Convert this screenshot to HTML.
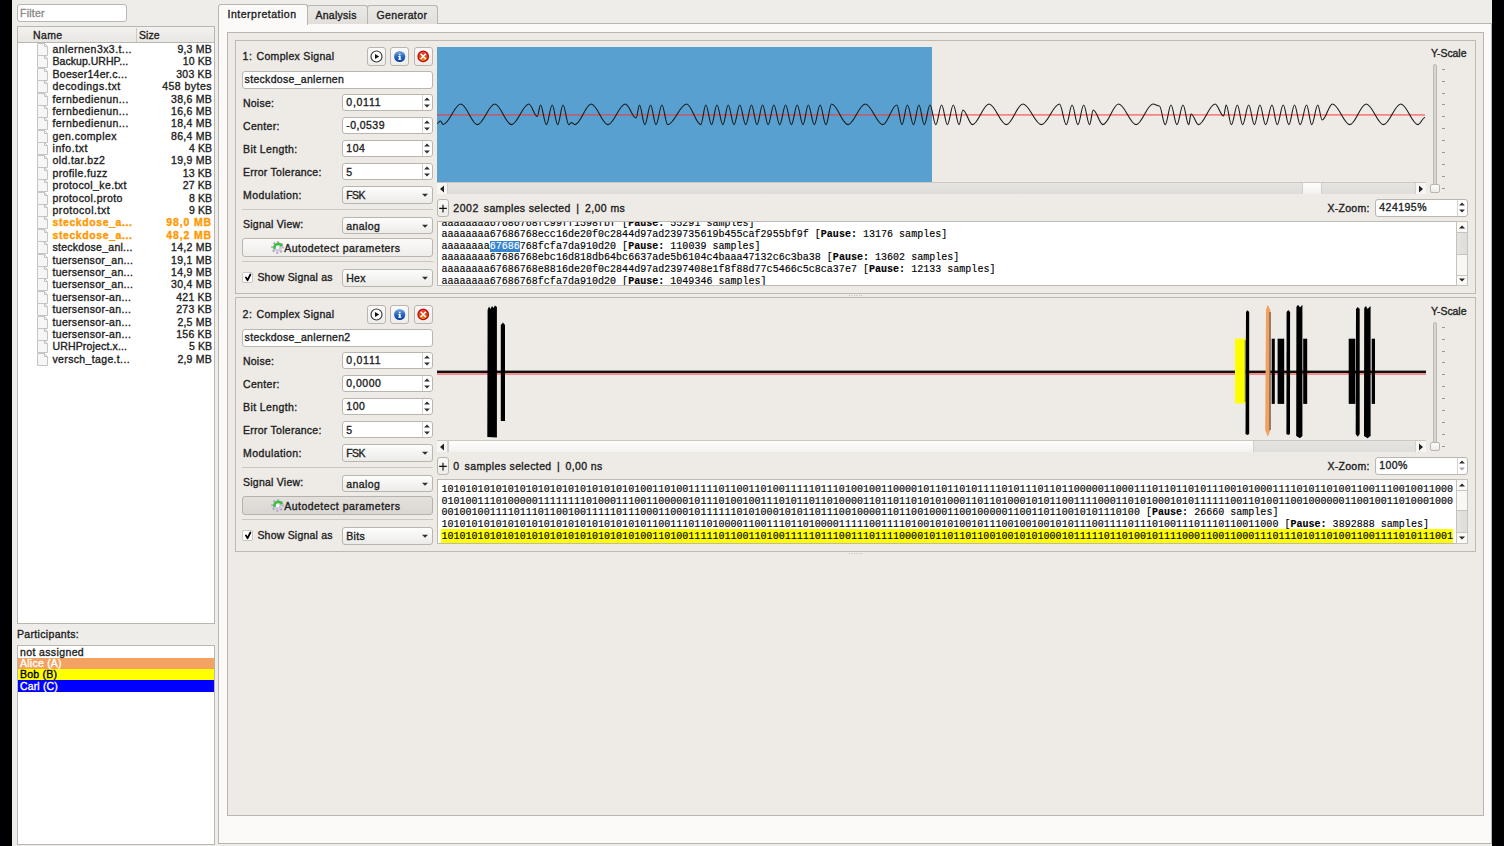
<!DOCTYPE html>
<html><head><meta charset="utf-8"><style>
html,body{margin:0;padding:0}
body{width:1504px;height:846px;position:relative;overflow:hidden;background:#efedea;font-family:"Liberation Sans",sans-serif;color:#1e1e1e}
body>div,body>svg{position:absolute}
.t{font-size:10.5px;line-height:13px;white-space:nowrap;-webkit-text-stroke:0.35px currentColor}
.m{font-family:"Liberation Mono",monospace;font-size:10px;letter-spacing:0.02px;line-height:11.6px;white-space:pre;color:#000;-webkit-text-stroke:0.15px #000}
</style></head><body>
<div style="left:0px;top:0px;width:12px;height:846px;background:#000"></div><div style="left:1492px;top:0px;width:12px;height:846px;background:#000"></div><div style="left:17px;top:4px;width:110px;height:18px;background:#fff;border:1px solid #b9b5af;border-radius:3px;box-sizing:border-box"></div><div class="t" style="left:20.00px;top:6.86px;font-size:10.5px;letter-spacing:0.237px;color:#8c8a87">Filter</div><div style="left:17px;top:26px;width:198px;height:598px;background:#fff;border:1px solid #b9b5af;box-sizing:border-box"></div><div style="left:18px;top:27px;width:196px;height:16px;background:linear-gradient(#f4f2f0,#e9e7e4);border-bottom:1px solid #b9b5af;box-sizing:border-box"></div><div style="left:136px;top:28px;width:1px;height:14px;background:#cfccc8"></div><div class="t" style="left:33.00px;top:28.56px;font-size:10.5px;letter-spacing:0.375px;">Name</div><div class="t" style="left:139.00px;top:28.56px;font-size:10.5px;letter-spacing:0.023px;">Size</div><svg style="left:36.5px;top:43.00px" width="11" height="13" viewBox="0 0 11 13"><path d="M0.5 0.5H7.5L10.5 3.5V12.5H0.5Z" fill="#f6f6f6" stroke="#c4c4c4"/><path d="M7.5 0.5V3.5H10.5" fill="none" stroke="#c4c4c4"/></svg><div class="t" style="left:52.50px;top:42.96px;font-size:10.5px;letter-spacing:0.441px;">anlernen3x3.t...</div><div class="t" style="right:1292.00px;top:42.96px;font-size:10.5px;letter-spacing:0.219px;">9,3 MB</div><svg style="left:36.5px;top:55.39px" width="11" height="13" viewBox="0 0 11 13"><path d="M0.5 0.5H7.5L10.5 3.5V12.5H0.5Z" fill="#f6f6f6" stroke="#c4c4c4"/><path d="M7.5 0.5V3.5H10.5" fill="none" stroke="#c4c4c4"/></svg><div class="t" style="left:52.50px;top:55.35px;font-size:10.5px;letter-spacing:0.039px;">Backup.URHP...</div><div class="t" style="right:1292.00px;top:55.35px;font-size:10.5px;letter-spacing:0.144px;">10 KB</div><svg style="left:36.5px;top:67.78px" width="11" height="13" viewBox="0 0 11 13"><path d="M0.5 0.5H7.5L10.5 3.5V12.5H0.5Z" fill="#f6f6f6" stroke="#c4c4c4"/><path d="M7.5 0.5V3.5H10.5" fill="none" stroke="#c4c4c4"/></svg><div class="t" style="left:52.50px;top:67.74px;font-size:10.5px;letter-spacing:0.284px;">Boeser14er.c...</div><div class="t" style="right:1292.00px;top:67.74px;font-size:10.5px;letter-spacing:0.206px;">303 KB</div><svg style="left:36.5px;top:80.17px" width="11" height="13" viewBox="0 0 11 13"><path d="M0.5 0.5H7.5L10.5 3.5V12.5H0.5Z" fill="#f6f6f6" stroke="#c4c4c4"/><path d="M7.5 0.5V3.5H10.5" fill="none" stroke="#c4c4c4"/></svg><div class="t" style="left:52.50px;top:80.13px;font-size:10.5px;letter-spacing:0.477px;">decodings.txt</div><div class="t" style="right:1292.00px;top:80.13px;font-size:10.5px;letter-spacing:0.476px;">458 bytes</div><svg style="left:36.5px;top:92.56px" width="11" height="13" viewBox="0 0 11 13"><path d="M0.5 0.5H7.5L10.5 3.5V12.5H0.5Z" fill="#f6f6f6" stroke="#c4c4c4"/><path d="M7.5 0.5V3.5H10.5" fill="none" stroke="#c4c4c4"/></svg><div class="t" style="left:52.50px;top:92.52px;font-size:10.5px;letter-spacing:0.415px;">fernbedienun...</div><div class="t" style="right:1292.00px;top:92.52px;font-size:10.5px;letter-spacing:0.261px;">38,6 MB</div><svg style="left:36.5px;top:104.95px" width="11" height="13" viewBox="0 0 11 13"><path d="M0.5 0.5H7.5L10.5 3.5V12.5H0.5Z" fill="#f6f6f6" stroke="#c4c4c4"/><path d="M7.5 0.5V3.5H10.5" fill="none" stroke="#c4c4c4"/></svg><div class="t" style="left:52.50px;top:104.91px;font-size:10.5px;letter-spacing:0.415px;">fernbedienun...</div><div class="t" style="right:1292.00px;top:104.91px;font-size:10.5px;letter-spacing:0.261px;">16,6 MB</div><svg style="left:36.5px;top:117.34px" width="11" height="13" viewBox="0 0 11 13"><path d="M0.5 0.5H7.5L10.5 3.5V12.5H0.5Z" fill="#f6f6f6" stroke="#c4c4c4"/><path d="M7.5 0.5V3.5H10.5" fill="none" stroke="#c4c4c4"/></svg><div class="t" style="left:52.50px;top:117.30px;font-size:10.5px;letter-spacing:0.415px;">fernbedienun...</div><div class="t" style="right:1292.00px;top:117.30px;font-size:10.5px;letter-spacing:0.261px;">18,4 MB</div><svg style="left:36.5px;top:129.73px" width="11" height="13" viewBox="0 0 11 13"><path d="M0.5 0.5H7.5L10.5 3.5V12.5H0.5Z" fill="#f6f6f6" stroke="#c4c4c4"/><path d="M7.5 0.5V3.5H10.5" fill="none" stroke="#c4c4c4"/></svg><div class="t" style="left:52.50px;top:129.69px;font-size:10.5px;letter-spacing:0.442px;">gen.complex</div><div class="t" style="right:1292.00px;top:129.69px;font-size:10.5px;letter-spacing:0.261px;">86,4 MB</div><svg style="left:36.5px;top:142.12px" width="11" height="13" viewBox="0 0 11 13"><path d="M0.5 0.5H7.5L10.5 3.5V12.5H0.5Z" fill="#f6f6f6" stroke="#c4c4c4"/><path d="M7.5 0.5V3.5H10.5" fill="none" stroke="#c4c4c4"/></svg><div class="t" style="left:52.50px;top:142.08px;font-size:10.5px;letter-spacing:0.574px;">info.txt</div><div class="t" style="right:1292.00px;top:142.08px;font-size:10.5px;letter-spacing:0.051px;">4 KB</div><svg style="left:36.5px;top:154.51px" width="11" height="13" viewBox="0 0 11 13"><path d="M0.5 0.5H7.5L10.5 3.5V12.5H0.5Z" fill="#f6f6f6" stroke="#c4c4c4"/><path d="M7.5 0.5V3.5H10.5" fill="none" stroke="#c4c4c4"/></svg><div class="t" style="left:52.50px;top:154.47px;font-size:10.5px;letter-spacing:0.396px;">old.tar.bz2</div><div class="t" style="right:1292.00px;top:154.47px;font-size:10.5px;letter-spacing:0.261px;">19,9 MB</div><svg style="left:36.5px;top:166.90px" width="11" height="13" viewBox="0 0 11 13"><path d="M0.5 0.5H7.5L10.5 3.5V12.5H0.5Z" fill="#f6f6f6" stroke="#c4c4c4"/><path d="M7.5 0.5V3.5H10.5" fill="none" stroke="#c4c4c4"/></svg><div class="t" style="left:52.50px;top:166.86px;font-size:10.5px;letter-spacing:0.362px;">profile.fuzz</div><div class="t" style="right:1292.00px;top:166.86px;font-size:10.5px;letter-spacing:0.144px;">13 KB</div><svg style="left:36.5px;top:179.29px" width="11" height="13" viewBox="0 0 11 13"><path d="M0.5 0.5H7.5L10.5 3.5V12.5H0.5Z" fill="#f6f6f6" stroke="#c4c4c4"/><path d="M7.5 0.5V3.5H10.5" fill="none" stroke="#c4c4c4"/></svg><div class="t" style="left:52.50px;top:179.25px;font-size:10.5px;letter-spacing:0.402px;">protocol_ke.txt</div><div class="t" style="right:1292.00px;top:179.25px;font-size:10.5px;letter-spacing:0.144px;">27 KB</div><svg style="left:36.5px;top:191.68px" width="11" height="13" viewBox="0 0 11 13"><path d="M0.5 0.5H7.5L10.5 3.5V12.5H0.5Z" fill="#f6f6f6" stroke="#c4c4c4"/><path d="M7.5 0.5V3.5H10.5" fill="none" stroke="#c4c4c4"/></svg><div class="t" style="left:52.50px;top:191.64px;font-size:10.5px;letter-spacing:0.440px;">protocol.proto</div><div class="t" style="right:1292.00px;top:191.64px;font-size:10.5px;letter-spacing:0.051px;">8 KB</div><svg style="left:36.5px;top:204.07px" width="11" height="13" viewBox="0 0 11 13"><path d="M0.5 0.5H7.5L10.5 3.5V12.5H0.5Z" fill="#f6f6f6" stroke="#c4c4c4"/><path d="M7.5 0.5V3.5H10.5" fill="none" stroke="#c4c4c4"/></svg><div class="t" style="left:52.50px;top:204.03px;font-size:10.5px;letter-spacing:0.531px;">protocol.txt</div><div class="t" style="right:1292.00px;top:204.03px;font-size:10.5px;letter-spacing:0.051px;">9 KB</div><svg style="left:36.5px;top:216.46px" width="11" height="13" viewBox="0 0 11 13"><path d="M0.5 0.5H7.5L10.5 3.5V12.5H0.5Z" fill="#f6f6f6" stroke="#c4c4c4"/><path d="M7.5 0.5V3.5H10.5" fill="none" stroke="#c4c4c4"/></svg><div class="t" style="left:52.50px;top:216.42px;font-size:10.5px;letter-spacing:0.586px;color:#ff9900;font-weight:bold">steckdose_a...</div><div class="t" style="right:1292.00px;top:216.42px;font-size:10.5px;letter-spacing:0.864px;color:#ff9900;font-weight:bold">98,0 MB</div><svg style="left:36.5px;top:228.85px" width="11" height="13" viewBox="0 0 11 13"><path d="M0.5 0.5H7.5L10.5 3.5V12.5H0.5Z" fill="#f6f6f6" stroke="#c4c4c4"/><path d="M7.5 0.5V3.5H10.5" fill="none" stroke="#c4c4c4"/></svg><div class="t" style="left:52.50px;top:228.81px;font-size:10.5px;letter-spacing:0.586px;color:#ff9900;font-weight:bold">steckdose_a...</div><div class="t" style="right:1292.00px;top:228.81px;font-size:10.5px;letter-spacing:0.864px;color:#ff9900;font-weight:bold">48,2 MB</div><svg style="left:36.5px;top:241.24px" width="11" height="13" viewBox="0 0 11 13"><path d="M0.5 0.5H7.5L10.5 3.5V12.5H0.5Z" fill="#f6f6f6" stroke="#c4c4c4"/><path d="M7.5 0.5V3.5H10.5" fill="none" stroke="#c4c4c4"/></svg><div class="t" style="left:52.50px;top:241.20px;font-size:10.5px;letter-spacing:0.269px;">steckdose_anl...</div><div class="t" style="right:1292.00px;top:241.20px;font-size:10.5px;letter-spacing:0.261px;">14,2 MB</div><svg style="left:36.5px;top:253.63px" width="11" height="13" viewBox="0 0 11 13"><path d="M0.5 0.5H7.5L10.5 3.5V12.5H0.5Z" fill="#f6f6f6" stroke="#c4c4c4"/><path d="M7.5 0.5V3.5H10.5" fill="none" stroke="#c4c4c4"/></svg><div class="t" style="left:52.50px;top:253.59px;font-size:10.5px;letter-spacing:0.299px;">tuersensor_an...</div><div class="t" style="right:1292.00px;top:253.59px;font-size:10.5px;letter-spacing:0.261px;">19,1 MB</div><svg style="left:36.5px;top:266.02px" width="11" height="13" viewBox="0 0 11 13"><path d="M0.5 0.5H7.5L10.5 3.5V12.5H0.5Z" fill="#f6f6f6" stroke="#c4c4c4"/><path d="M7.5 0.5V3.5H10.5" fill="none" stroke="#c4c4c4"/></svg><div class="t" style="left:52.50px;top:265.98px;font-size:10.5px;letter-spacing:0.299px;">tuersensor_an...</div><div class="t" style="right:1292.00px;top:265.98px;font-size:10.5px;letter-spacing:0.261px;">14,9 MB</div><svg style="left:36.5px;top:278.41px" width="11" height="13" viewBox="0 0 11 13"><path d="M0.5 0.5H7.5L10.5 3.5V12.5H0.5Z" fill="#f6f6f6" stroke="#c4c4c4"/><path d="M7.5 0.5V3.5H10.5" fill="none" stroke="#c4c4c4"/></svg><div class="t" style="left:52.50px;top:278.37px;font-size:10.5px;letter-spacing:0.299px;">tuersensor_an...</div><div class="t" style="right:1292.00px;top:278.37px;font-size:10.5px;letter-spacing:0.261px;">30,4 MB</div><svg style="left:36.5px;top:290.80px" width="11" height="13" viewBox="0 0 11 13"><path d="M0.5 0.5H7.5L10.5 3.5V12.5H0.5Z" fill="#f6f6f6" stroke="#c4c4c4"/><path d="M7.5 0.5V3.5H10.5" fill="none" stroke="#c4c4c4"/></svg><div class="t" style="left:52.50px;top:290.76px;font-size:10.5px;letter-spacing:0.318px;">tuersensor-an...</div><div class="t" style="right:1292.00px;top:290.76px;font-size:10.5px;letter-spacing:0.206px;">421 KB</div><svg style="left:36.5px;top:303.19px" width="11" height="13" viewBox="0 0 11 13"><path d="M0.5 0.5H7.5L10.5 3.5V12.5H0.5Z" fill="#f6f6f6" stroke="#c4c4c4"/><path d="M7.5 0.5V3.5H10.5" fill="none" stroke="#c4c4c4"/></svg><div class="t" style="left:52.50px;top:303.15px;font-size:10.5px;letter-spacing:0.318px;">tuersensor-an...</div><div class="t" style="right:1292.00px;top:303.15px;font-size:10.5px;letter-spacing:0.206px;">273 KB</div><svg style="left:36.5px;top:315.58px" width="11" height="13" viewBox="0 0 11 13"><path d="M0.5 0.5H7.5L10.5 3.5V12.5H0.5Z" fill="#f6f6f6" stroke="#c4c4c4"/><path d="M7.5 0.5V3.5H10.5" fill="none" stroke="#c4c4c4"/></svg><div class="t" style="left:52.50px;top:315.54px;font-size:10.5px;letter-spacing:0.318px;">tuersensor-an...</div><div class="t" style="right:1292.00px;top:315.54px;font-size:10.5px;letter-spacing:0.219px;">2,5 MB</div><svg style="left:36.5px;top:327.97px" width="11" height="13" viewBox="0 0 11 13"><path d="M0.5 0.5H7.5L10.5 3.5V12.5H0.5Z" fill="#f6f6f6" stroke="#c4c4c4"/><path d="M7.5 0.5V3.5H10.5" fill="none" stroke="#c4c4c4"/></svg><div class="t" style="left:52.50px;top:327.93px;font-size:10.5px;letter-spacing:0.318px;">tuersensor-an...</div><div class="t" style="right:1292.00px;top:327.93px;font-size:10.5px;letter-spacing:0.206px;">156 KB</div><svg style="left:36.5px;top:340.36px" width="11" height="13" viewBox="0 0 11 13"><path d="M0.5 0.5H7.5L10.5 3.5V12.5H0.5Z" fill="#f6f6f6" stroke="#c4c4c4"/><path d="M7.5 0.5V3.5H10.5" fill="none" stroke="#c4c4c4"/></svg><div class="t" style="left:52.50px;top:340.32px;font-size:10.5px;letter-spacing:0.152px;">URHProject.x...</div><div class="t" style="right:1292.00px;top:340.32px;font-size:10.5px;letter-spacing:0.051px;">5 KB</div><svg style="left:36.5px;top:352.75px" width="11" height="13" viewBox="0 0 11 13"><path d="M0.5 0.5H7.5L10.5 3.5V12.5H0.5Z" fill="#f6f6f6" stroke="#c4c4c4"/><path d="M7.5 0.5V3.5H10.5" fill="none" stroke="#c4c4c4"/></svg><div class="t" style="left:52.50px;top:352.71px;font-size:10.5px;letter-spacing:0.352px;">versch_tage.t...</div><div class="t" style="right:1292.00px;top:352.71px;font-size:10.5px;letter-spacing:0.219px;">2,9 MB</div><div class="t" style="left:17.00px;top:628.26px;font-size:10.5px;letter-spacing:0.333px;">Participants:</div><div style="left:17px;top:645px;width:198px;height:200px;background:#fff;border:1px solid #b9b5af;box-sizing:border-box"></div><div style="left:18px;top:658px;width:196px;height:11px;background:#f4a261"></div><div style="left:18px;top:669px;width:196px;height:11px;background:#ffff00"></div><div style="left:18px;top:680px;width:196px;height:12px;background:#0000ff"></div><div class="t" style="left:20.00px;top:645.66px;font-size:10.5px;letter-spacing:0.378px;">not assigned</div><div class="t" style="left:20.00px;top:656.96px;font-size:10.5px;letter-spacing:0.243px;color:#fff">Alice (A)</div><div class="t" style="left:20.00px;top:668.26px;font-size:10.5px;letter-spacing:0.223px;color:#000">Bob (B)</div><div class="t" style="left:20.00px;top:679.56px;font-size:10.5px;letter-spacing:0.152px;color:#fff">Carl (C)</div><div style="left:218px;top:23px;width:1274px;height:821px;background:#fbfaf8;border:1px solid #b9b5af;box-sizing:border-box"></div><div style="left:307px;top:5px;width:61px;height:19px;background:linear-gradient(#ebe9e6,#e2dfdb);border:1px solid #b9b5af;border-bottom:none;border-radius:3px 3px 0 0;box-sizing:border-box"></div><div style="left:367px;top:5px;width:71px;height:19px;background:linear-gradient(#ebe9e6,#e2dfdb);border:1px solid #b9b5af;border-bottom:none;border-radius:3px 3px 0 0;box-sizing:border-box"></div><div style="left:218px;top:4px;width:90px;height:21px;background:#fbfaf8;border:1px solid #b9b5af;border-bottom:none;border-radius:3px 3px 0 0;box-sizing:border-box"></div><div class="t" style="left:227.50px;top:8.16px;font-size:10.5px;letter-spacing:0.515px;">Interpretation</div><div class="t" style="left:315.50px;top:9.16px;font-size:10.5px;letter-spacing:0.262px;">Analysis</div><div class="t" style="left:376.50px;top:9.16px;font-size:10.5px;letter-spacing:0.389px;">Generator</div><div style="left:227px;top:32px;width:1257px;height:784px;background:#eeebe7;border:1px solid #b9b5af;box-sizing:border-box"></div><div style="left:235px;top:40px;width:1241px;height:254px;background:#eeebe7;border:1px solid #bdb9b3;box-sizing:border-box"></div><div style="left:849px;top:295px;width:1px;height:1px;background:#c8c4be"></div><div style="left:851px;top:295px;width:1px;height:1px;background:#c8c4be"></div><div style="left:854px;top:295px;width:1px;height:1px;background:#c8c4be"></div><div style="left:856px;top:295px;width:1px;height:1px;background:#c8c4be"></div><div style="left:859px;top:295px;width:1px;height:1px;background:#c8c4be"></div><div style="left:861px;top:295px;width:1px;height:1px;background:#c8c4be"></div><div class="t" style="left:242.60px;top:50.16px;font-size:10.5px;letter-spacing:0.484px;">1:</div><div class="t" style="left:256.60px;top:50.16px;font-size:10.5px;letter-spacing:0.301px;">Complex Signal</div><div style="left:367px;top:47px;width:19px;height:19px;background:linear-gradient(#fbfaf9,#efedea);border:1px solid #b9b5af;border-radius:3px;box-sizing:border-box"></div><div style="left:390px;top:47px;width:19px;height:19px;background:linear-gradient(#fbfaf9,#efedea);border:1px solid #b9b5af;border-radius:3px;box-sizing:border-box"></div><div style="left:414px;top:47px;width:19px;height:19px;background:linear-gradient(#fbfaf9,#efedea);border:1px solid #b9b5af;border-radius:3px;box-sizing:border-box"></div><svg style="left:369px;top:49px" width="15" height="15" viewBox="0 0 15 15"><circle cx="7.5" cy="7.5" r="5.5" fill="#fff" stroke="#3a3a3a" stroke-width="1.15"/><path d="M6 4.9L10.2 7.5L6 10.1Z" fill="#111"/></svg><svg style="left:392px;top:49px" width="15" height="15" viewBox="0 0 15 15"><defs><linearGradient id="ig1" x1="0" y1="0" x2="0" y2="1"><stop offset="0" stop-color="#7aaee6"/><stop offset="0.45" stop-color="#2f6fc0"/><stop offset="1" stop-color="#0038a0"/></linearGradient></defs><circle cx="7.7" cy="7.5" r="5.6" fill="url(#ig1)"/><circle cx="7.75" cy="5.6" r="0.9" fill="#fff"/><rect x="6.9" y="7.1" width="1.8" height="3.4" fill="#fff"/><rect x="6.2" y="7.1" width="1.6" height="0.8" fill="#fff"/><rect x="6.1" y="9.8" width="3.3" height="0.9" fill="#fff"/></svg><svg style="left:415px;top:49px" width="15" height="15" viewBox="0 0 15 15"><defs><linearGradient id="cg1" x1="0" y1="0" x2="0" y2="1"><stop offset="0" stop-color="#e04040"/><stop offset="0.5" stop-color="#e04a10"/><stop offset="1" stop-color="#f0a010"/></linearGradient></defs><circle cx="8.2" cy="7.4" r="5.2" fill="url(#cg1)" stroke="#c20808" stroke-width="1.3"/><path d="M5.6 4.8L10.8 10M10.8 4.8L5.6 10" stroke="#fff" stroke-width="1.6"/></svg><div style="left:242px;top:71px;width:191px;height:18px;background:#fff;border:1px solid #b9b5af;border-radius:3px;box-sizing:border-box"></div><div class="t" style="left:244.60px;top:73.16px;font-size:10.5px;letter-spacing:0.310px;">steckdose_anlernen</div><div class="t" style="left:243.00px;top:96.56px;font-size:10.5px;letter-spacing:0.224px;">Noise:</div><div class="t" style="left:243.00px;top:119.71px;font-size:10.5px;letter-spacing:0.346px;">Center:</div><div class="t" style="left:243.00px;top:142.86px;font-size:10.5px;letter-spacing:0.401px;">Bit Length:</div><div class="t" style="left:243.00px;top:166.01px;font-size:10.5px;letter-spacing:0.256px;">Error Tolerance:</div><div class="t" style="left:243.00px;top:189.16px;font-size:10.5px;letter-spacing:0.416px;">Modulation:</div><div style="left:342px;top:94px;width:91px;height:17px;background:#fff;border:1px solid #b9b5af;border-radius:3px;box-sizing:border-box"></div><div style="left:422px;top:95px;width:1px;height:15px;background:#d6d3cf"></div><svg style="left:424.00px;top:94.00px" width="6" height="16" viewBox="0 0 6 16"><path d="M0.1 6.4L3 3.4L5.9 6.4Z" fill="#2e2e2e"/><path d="M0.1 10.6L3 13.4L5.9 10.6Z" fill="#2e2e2e"/></svg><div class="t" style="left:346.30px;top:96.16px;font-size:10.5px;letter-spacing:0.740px;">0,0111</div><div style="left:342px;top:117px;width:91px;height:17px;background:#fff;border:1px solid #b9b5af;border-radius:3px;box-sizing:border-box"></div><div style="left:422px;top:118px;width:1px;height:15px;background:#d6d3cf"></div><svg style="left:424.00px;top:117.15px" width="6" height="16" viewBox="0 0 6 16"><path d="M0.1 6.4L3 3.4L5.9 6.4Z" fill="#2e2e2e"/><path d="M0.1 10.6L3 13.4L5.9 10.6Z" fill="#2e2e2e"/></svg><div class="t" style="left:346.30px;top:119.31px;font-size:10.5px;letter-spacing:0.426px;">-0,0539</div><div style="left:342px;top:140px;width:91px;height:17px;background:#fff;border:1px solid #b9b5af;border-radius:3px;box-sizing:border-box"></div><div style="left:422px;top:141px;width:1px;height:15px;background:#d6d3cf"></div><svg style="left:424.00px;top:140.30px" width="6" height="16" viewBox="0 0 6 16"><path d="M0.1 6.4L3 3.4L5.9 6.4Z" fill="#2e2e2e"/><path d="M0.1 10.6L3 13.4L5.9 10.6Z" fill="#2e2e2e"/></svg><div class="t" style="left:346.30px;top:142.46px;font-size:10.5px;letter-spacing:0.521px;">104</div><div style="left:342px;top:163px;width:91px;height:17px;background:#fff;border:1px solid #b9b5af;border-radius:3px;box-sizing:border-box"></div><div style="left:422px;top:164px;width:1px;height:15px;background:#d6d3cf"></div><svg style="left:424.00px;top:163.45px" width="6" height="16" viewBox="0 0 6 16"><path d="M0.1 6.4L3 3.4L5.9 6.4Z" fill="#2e2e2e"/><path d="M0.1 10.6L3 13.4L5.9 10.6Z" fill="#2e2e2e"/></svg><div class="t" style="left:346.30px;top:165.61px;font-size:10.5px;letter-spacing:0.531px;">5</div><div style="left:342px;top:186px;width:91px;height:18px;background:linear-gradient(#fdfdfd,#ecebe8);border:1px solid #b9b5af;border-radius:3px;box-sizing:border-box"></div><svg style="left:421.80px;top:186.00px" width="6" height="14" viewBox="0 0 6 14"><path d="M0 7.7H6L3 10.7Z" fill="#2e2e2e"/></svg><div class="t" style="left:346.30px;top:188.66px;font-size:10.5px;letter-spacing:-0.646px;">FSK</div><div style="left:242px;top:209px;width:191px;height:1px;background:#cac6c1"></div><div class="t" style="left:243.00px;top:218.26px;font-size:10.5px;letter-spacing:0.238px;">Signal View:</div><div style="left:342px;top:217px;width:91px;height:17px;background:linear-gradient(#fdfdfd,#ecebe8);border:1px solid #b9b5af;border-radius:3px;box-sizing:border-box"></div><svg style="left:421.80px;top:217.00px" width="6" height="14" viewBox="0 0 6 14"><path d="M0 7.7H6L3 10.7Z" fill="#2e2e2e"/></svg><div class="t" style="left:346.30px;top:219.66px;font-size:10.5px;letter-spacing:0.385px;">analog</div><div style="left:242px;top:238px;width:191px;height:19px;background:linear-gradient(#fbfaf9,#efedea);border:1px solid #b9b5af;border-radius:3px;box-sizing:border-box"></div><svg style="left:270.50px;top:241.00px" width="13" height="13" viewBox="0 0 13 13"><circle cx="6.5" cy="6.5" r="5.2" fill="none" stroke="#b2aac6" stroke-width="2.2" stroke-dasharray="2.04 2.04" transform="rotate(-11 6.5 6.5)"/><circle cx="6.5" cy="6.5" r="4.3" fill="#cdc6dc"/><circle cx="6.5" cy="6.5" r="1.9" fill="#f6f3fa"/><path d="M3.7 8A3.2 3.2 0 0 1 10.8 5.2" fill="none" stroke="#36c236" stroke-width="2.5"/></svg><div class="t" style="left:284.20px;top:241.96px;font-size:10.5px;letter-spacing:0.484px;">Autodetect parameters</div><div style="left:242px;top:261px;width:191px;height:1px;background:#cac6c1"></div><div style="left:242px;top:272px;width:11px;height:11px;background:#fff;border:1px solid #c9c5c0;border-radius:2px;box-sizing:border-box"></div><svg style="left:243.5px;top:273.00px" width="9" height="9" viewBox="0 0 9 9"><path d="M1.9 4.4L3.6 7.2L6.4 1.5" fill="none" stroke="#000" stroke-width="1.8" stroke-linecap="round" stroke-linejoin="round"/></svg><div class="t" style="left:257.40px;top:270.86px;font-size:10.5px;letter-spacing:0.215px;">Show Signal as</div><div style="left:342px;top:269px;width:91px;height:18px;background:linear-gradient(#fdfdfd,#ecebe8);border:1px solid #b9b5af;border-radius:3px;box-sizing:border-box"></div><svg style="left:421.80px;top:269.00px" width="6" height="14" viewBox="0 0 6 14"><path d="M0 7.7H6L3 10.7Z" fill="#2e2e2e"/></svg><div class="t" style="left:346.30px;top:271.66px;font-size:10.5px;letter-spacing:0.245px;">Hex</div><div class="t" style="left:1431.00px;top:46.96px;font-size:10.5px;letter-spacing:-0.054px;">Y-Scale</div><div style="left:1433px;top:64px;width:4px;height:126px;background:#d8d5d1;border:1px solid #bcb8b2;border-radius:2px;box-sizing:border-box"></div><div style="left:1442px;top:69px;width:3px;height:1px;background:#9a9894"></div><div style="left:1442px;top:81px;width:3px;height:1px;background:#9a9894"></div><div style="left:1442px;top:93px;width:3px;height:1px;background:#9a9894"></div><div style="left:1442px;top:104px;width:3px;height:1px;background:#9a9894"></div><div style="left:1442px;top:116px;width:3px;height:1px;background:#9a9894"></div><div style="left:1442px;top:128px;width:3px;height:1px;background:#9a9894"></div><div style="left:1442px;top:140px;width:3px;height:1px;background:#9a9894"></div><div style="left:1442px;top:152px;width:3px;height:1px;background:#9a9894"></div><div style="left:1442px;top:164px;width:3px;height:1px;background:#9a9894"></div><div style="left:1442px;top:176px;width:3px;height:1px;background:#9a9894"></div><div style="left:1442px;top:188px;width:3px;height:1px;background:#9a9894"></div><div style="left:1430px;top:184px;width:10px;height:9px;background:linear-gradient(#fdfdfd,#eceae7);border:1px solid #b9b5af;border-radius:2px;box-sizing:border-box"></div><div style="left:437px;top:199px;width:12px;height:18px;background:linear-gradient(#fbfaf9,#efedea);border:1px solid #b9b5af;border-radius:3px;box-sizing:border-box"></div><svg style="left:438px;top:203.00px" width="10" height="11" viewBox="0 0 10 11"><path d="M1.2 5.4H8.8M5 1.8V9.4" stroke="#111" stroke-width="1.15"/></svg><div class="t" style="left:453.30px;top:202.16px;font-size:10.5px;letter-spacing:0.523px;">2002</div><div class="t" style="left:483.80px;top:202.16px;font-size:10.5px;letter-spacing:0.365px;">samples selected</div><div class="t" style="left:576.30px;top:202.16px;font-size:10.5px;letter-spacing:0.641px;">|</div><div class="t" style="left:584.90px;top:202.16px;font-size:10.5px;letter-spacing:0.435px;">2,00 ms</div><div class="t" style="left:1327.50px;top:202.16px;font-size:10.5px;letter-spacing:0.272px;">X-Zoom:</div><div style="left:1375px;top:199px;width:93px;height:18px;background:#fff;border:1px solid #b9b5af;border-radius:3px;box-sizing:border-box"></div><div style="left:1457px;top:200px;width:1px;height:16px;background:#d6d3cf"></div><svg style="left:1459.00px;top:199.00px" width="6" height="16" viewBox="0 0 6 16"><path d="M0.1 6.4L3 3.4L5.9 6.4Z" fill="#2e2e2e"/><path d="M0.1 10.6L3 13.4L5.9 10.6Z" fill="#2e2e2e"/></svg><div class="t" style="left:1379.30px;top:201.16px;font-size:10.5px;letter-spacing:0.473px;">424195%</div><div style="left:235px;top:297px;width:1241px;height:255px;background:#eeebe7;border:1px solid #bdb9b3;box-sizing:border-box"></div><div style="left:849px;top:553px;width:1px;height:1px;background:#c8c4be"></div><div style="left:851px;top:553px;width:1px;height:1px;background:#c8c4be"></div><div style="left:854px;top:553px;width:1px;height:1px;background:#c8c4be"></div><div style="left:856px;top:553px;width:1px;height:1px;background:#c8c4be"></div><div style="left:859px;top:553px;width:1px;height:1px;background:#c8c4be"></div><div style="left:861px;top:553px;width:1px;height:1px;background:#c8c4be"></div><div class="t" style="left:242.60px;top:308.16px;font-size:10.5px;letter-spacing:0.484px;">2:</div><div class="t" style="left:256.60px;top:308.16px;font-size:10.5px;letter-spacing:0.301px;">Complex Signal</div><div style="left:367px;top:305px;width:19px;height:19px;background:linear-gradient(#fbfaf9,#efedea);border:1px solid #b9b5af;border-radius:3px;box-sizing:border-box"></div><div style="left:390px;top:305px;width:19px;height:19px;background:linear-gradient(#fbfaf9,#efedea);border:1px solid #b9b5af;border-radius:3px;box-sizing:border-box"></div><div style="left:414px;top:305px;width:19px;height:19px;background:linear-gradient(#fbfaf9,#efedea);border:1px solid #b9b5af;border-radius:3px;box-sizing:border-box"></div><svg style="left:369px;top:307px" width="15" height="15" viewBox="0 0 15 15"><circle cx="7.5" cy="7.5" r="5.5" fill="#fff" stroke="#3a3a3a" stroke-width="1.15"/><path d="M6 4.9L10.2 7.5L6 10.1Z" fill="#111"/></svg><svg style="left:392px;top:307px" width="15" height="15" viewBox="0 0 15 15"><defs><linearGradient id="ig2" x1="0" y1="0" x2="0" y2="1"><stop offset="0" stop-color="#7aaee6"/><stop offset="0.45" stop-color="#2f6fc0"/><stop offset="1" stop-color="#0038a0"/></linearGradient></defs><circle cx="7.7" cy="7.5" r="5.6" fill="url(#ig2)"/><circle cx="7.75" cy="5.6" r="0.9" fill="#fff"/><rect x="6.9" y="7.1" width="1.8" height="3.4" fill="#fff"/><rect x="6.2" y="7.1" width="1.6" height="0.8" fill="#fff"/><rect x="6.1" y="9.8" width="3.3" height="0.9" fill="#fff"/></svg><svg style="left:415px;top:307px" width="15" height="15" viewBox="0 0 15 15"><defs><linearGradient id="cg2" x1="0" y1="0" x2="0" y2="1"><stop offset="0" stop-color="#e04040"/><stop offset="0.5" stop-color="#e04a10"/><stop offset="1" stop-color="#f0a010"/></linearGradient></defs><circle cx="8.2" cy="7.4" r="5.2" fill="url(#cg2)" stroke="#c20808" stroke-width="1.3"/><path d="M5.6 4.8L10.8 10M10.8 4.8L5.6 10" stroke="#fff" stroke-width="1.6"/></svg><div style="left:242px;top:329px;width:191px;height:18px;background:#fff;border:1px solid #b9b5af;border-radius:3px;box-sizing:border-box"></div><div class="t" style="left:244.60px;top:331.16px;font-size:10.5px;letter-spacing:0.322px;">steckdose_anlernen2</div><div class="t" style="left:243.00px;top:354.56px;font-size:10.5px;letter-spacing:0.224px;">Noise:</div><div class="t" style="left:243.00px;top:377.71px;font-size:10.5px;letter-spacing:0.346px;">Center:</div><div class="t" style="left:243.00px;top:400.86px;font-size:10.5px;letter-spacing:0.401px;">Bit Length:</div><div class="t" style="left:243.00px;top:424.01px;font-size:10.5px;letter-spacing:0.256px;">Error Tolerance:</div><div class="t" style="left:243.00px;top:447.16px;font-size:10.5px;letter-spacing:0.416px;">Modulation:</div><div style="left:342px;top:352px;width:91px;height:17px;background:#fff;border:1px solid #b9b5af;border-radius:3px;box-sizing:border-box"></div><div style="left:422px;top:353px;width:1px;height:15px;background:#d6d3cf"></div><svg style="left:424.00px;top:352.00px" width="6" height="16" viewBox="0 0 6 16"><path d="M0.1 6.4L3 3.4L5.9 6.4Z" fill="#2e2e2e"/><path d="M0.1 10.6L3 13.4L5.9 10.6Z" fill="#2e2e2e"/></svg><div class="t" style="left:346.30px;top:354.16px;font-size:10.5px;letter-spacing:0.740px;">0,0111</div><div style="left:342px;top:375px;width:91px;height:17px;background:#fff;border:1px solid #b9b5af;border-radius:3px;box-sizing:border-box"></div><div style="left:422px;top:376px;width:1px;height:15px;background:#d6d3cf"></div><svg style="left:424.00px;top:375.15px" width="6" height="16" viewBox="0 0 6 16"><path d="M0.1 6.4L3 3.4L5.9 6.4Z" fill="#2e2e2e"/><path d="M0.1 10.6L3 13.4L5.9 10.6Z" fill="#2e2e2e"/></svg><div class="t" style="left:346.30px;top:377.31px;font-size:10.5px;letter-spacing:0.479px;">0,0000</div><div style="left:342px;top:398px;width:91px;height:17px;background:#fff;border:1px solid #b9b5af;border-radius:3px;box-sizing:border-box"></div><div style="left:422px;top:399px;width:1px;height:15px;background:#d6d3cf"></div><svg style="left:424.00px;top:398.30px" width="6" height="16" viewBox="0 0 6 16"><path d="M0.1 6.4L3 3.4L5.9 6.4Z" fill="#2e2e2e"/><path d="M0.1 10.6L3 13.4L5.9 10.6Z" fill="#2e2e2e"/></svg><div class="t" style="left:346.30px;top:400.46px;font-size:10.5px;letter-spacing:0.521px;">100</div><div style="left:342px;top:421px;width:91px;height:17px;background:#fff;border:1px solid #b9b5af;border-radius:3px;box-sizing:border-box"></div><div style="left:422px;top:422px;width:1px;height:15px;background:#d6d3cf"></div><svg style="left:424.00px;top:421.45px" width="6" height="16" viewBox="0 0 6 16"><path d="M0.1 6.4L3 3.4L5.9 6.4Z" fill="#2e2e2e"/><path d="M0.1 10.6L3 13.4L5.9 10.6Z" fill="#2e2e2e"/></svg><div class="t" style="left:346.30px;top:423.61px;font-size:10.5px;letter-spacing:0.531px;">5</div><div style="left:342px;top:444px;width:91px;height:18px;background:linear-gradient(#fdfdfd,#ecebe8);border:1px solid #b9b5af;border-radius:3px;box-sizing:border-box"></div><svg style="left:421.80px;top:444.00px" width="6" height="14" viewBox="0 0 6 14"><path d="M0 7.7H6L3 10.7Z" fill="#2e2e2e"/></svg><div class="t" style="left:346.30px;top:446.66px;font-size:10.5px;letter-spacing:-0.646px;">FSK</div><div style="left:242px;top:467px;width:191px;height:1px;background:#cac6c1"></div><div class="t" style="left:243.00px;top:476.26px;font-size:10.5px;letter-spacing:0.238px;">Signal View:</div><div style="left:342px;top:475px;width:91px;height:17px;background:linear-gradient(#fdfdfd,#ecebe8);border:1px solid #b9b5af;border-radius:3px;box-sizing:border-box"></div><svg style="left:421.80px;top:475.00px" width="6" height="14" viewBox="0 0 6 14"><path d="M0 7.7H6L3 10.7Z" fill="#2e2e2e"/></svg><div class="t" style="left:346.30px;top:477.66px;font-size:10.5px;letter-spacing:0.385px;">analog</div><div style="left:242px;top:496px;width:191px;height:19px;background:linear-gradient(#e4e1dd,#dad7d3);border:1px solid #b5b1ab;border-radius:3px;box-sizing:border-box"></div><svg style="left:270.50px;top:499.00px" width="13" height="13" viewBox="0 0 13 13"><circle cx="6.5" cy="6.5" r="5.2" fill="none" stroke="#b2aac6" stroke-width="2.2" stroke-dasharray="2.04 2.04" transform="rotate(-11 6.5 6.5)"/><circle cx="6.5" cy="6.5" r="4.3" fill="#cdc6dc"/><circle cx="6.5" cy="6.5" r="1.9" fill="#f6f3fa"/><path d="M3.7 8A3.2 3.2 0 0 1 10.8 5.2" fill="none" stroke="#36c236" stroke-width="2.5"/></svg><div class="t" style="left:284.20px;top:499.96px;font-size:10.5px;letter-spacing:0.484px;">Autodetect parameters</div><div style="left:242px;top:519px;width:191px;height:1px;background:#cac6c1"></div><div style="left:242px;top:530px;width:11px;height:11px;background:#fff;border:1px solid #c9c5c0;border-radius:2px;box-sizing:border-box"></div><svg style="left:243.5px;top:531.00px" width="9" height="9" viewBox="0 0 9 9"><path d="M1.9 4.4L3.6 7.2L6.4 1.5" fill="none" stroke="#000" stroke-width="1.8" stroke-linecap="round" stroke-linejoin="round"/></svg><div class="t" style="left:257.40px;top:528.86px;font-size:10.5px;letter-spacing:0.215px;">Show Signal as</div><div style="left:342px;top:527px;width:91px;height:18px;background:linear-gradient(#fdfdfd,#ecebe8);border:1px solid #b9b5af;border-radius:3px;box-sizing:border-box"></div><svg style="left:421.80px;top:527.00px" width="6" height="14" viewBox="0 0 6 14"><path d="M0 7.7H6L3 10.7Z" fill="#2e2e2e"/></svg><div class="t" style="left:346.30px;top:529.66px;font-size:10.5px;letter-spacing:0.316px;">Bits</div><div class="t" style="left:1431.00px;top:304.96px;font-size:10.5px;letter-spacing:-0.054px;">Y-Scale</div><div style="left:1433px;top:322px;width:4px;height:126px;background:#d8d5d1;border:1px solid #bcb8b2;border-radius:2px;box-sizing:border-box"></div><div style="left:1442px;top:327px;width:3px;height:1px;background:#9a9894"></div><div style="left:1442px;top:339px;width:3px;height:1px;background:#9a9894"></div><div style="left:1442px;top:351px;width:3px;height:1px;background:#9a9894"></div><div style="left:1442px;top:362px;width:3px;height:1px;background:#9a9894"></div><div style="left:1442px;top:374px;width:3px;height:1px;background:#9a9894"></div><div style="left:1442px;top:386px;width:3px;height:1px;background:#9a9894"></div><div style="left:1442px;top:398px;width:3px;height:1px;background:#9a9894"></div><div style="left:1442px;top:410px;width:3px;height:1px;background:#9a9894"></div><div style="left:1442px;top:422px;width:3px;height:1px;background:#9a9894"></div><div style="left:1442px;top:434px;width:3px;height:1px;background:#9a9894"></div><div style="left:1442px;top:446px;width:3px;height:1px;background:#9a9894"></div><div style="left:1430px;top:442px;width:10px;height:9px;background:linear-gradient(#fdfdfd,#eceae7);border:1px solid #b9b5af;border-radius:2px;box-sizing:border-box"></div><div style="left:437px;top:457px;width:12px;height:18px;background:linear-gradient(#fbfaf9,#efedea);border:1px solid #b9b5af;border-radius:3px;box-sizing:border-box"></div><svg style="left:438px;top:461.00px" width="10" height="11" viewBox="0 0 10 11"><path d="M1.2 5.4H8.8M5 1.8V9.4" stroke="#111" stroke-width="1.15"/></svg><div class="t" style="left:453.30px;top:460.16px;font-size:10.5px;letter-spacing:0.531px;">0</div><div class="t" style="left:464.60px;top:460.16px;font-size:10.5px;letter-spacing:0.365px;">samples selected</div><div class="t" style="left:557.00px;top:460.16px;font-size:10.5px;letter-spacing:0.641px;">|</div><div class="t" style="left:565.60px;top:460.16px;font-size:10.5px;letter-spacing:0.364px;">0,00 ns</div><div class="t" style="left:1327.50px;top:460.16px;font-size:10.5px;letter-spacing:0.272px;">X-Zoom:</div><div style="left:1375px;top:457px;width:93px;height:18px;background:#fff;border:1px solid #b9b5af;border-radius:3px;box-sizing:border-box"></div><div style="left:1457px;top:458px;width:1px;height:16px;background:#d6d3cf"></div><svg style="left:1459.00px;top:457.00px" width="6" height="16" viewBox="0 0 6 16"><path d="M0.1 6.4L3 3.4L5.9 6.4Z" fill="#2e2e2e"/><path d="M0.1 10.6L3 13.4L5.9 10.6Z" fill="#a9a7a4"/></svg><div class="t" style="left:1379.30px;top:459.16px;font-size:10.5px;letter-spacing:0.434px;">100%</div><div style="left:437px;top:47px;width:495px;height:135px;background:#57a0cf"></div><svg style="left:0;top:0" width="1504" height="300"><line x1="437" y1="114.9" x2="1425" y2="114.9" stroke="#ff3030" stroke-opacity="0.55" stroke-width="1.6"/><path d="M437.0 123.5C438.3 123.5 439.2 121.0 440.5 121.0C441.4 121.0 442.1 124.5 443.0 124.5C449.4 124.5 454.4 104.0 460.8 104.0C466.8 104.0 471.4 124.6 477.4 124.6C483.7 124.6 488.5 104.0 494.8 104.0C500.8 104.0 505.5 124.6 511.5 124.6C517.8 124.6 522.6 104.0 528.9 104.0C531.9 104.0 534.2 116.5 537.2 116.5C538.4 116.5 539.3 105.0 540.5 105.0C542.6 105.0 544.3 124.6 546.4 124.6C548.5 124.6 550.1 105.0 552.2 105.0C554.2 105.0 555.7 124.6 557.7 124.6C559.6 124.6 561.1 105.0 563.0 105.0C565.1 105.0 566.7 124.6 568.8 124.6C569.8 124.6 570.5 122.5 571.5 122.5C572.8 122.5 573.7 124.6 575.0 124.6C580.8 124.6 585.4 104.0 591.2 104.0C597.2 104.0 601.9 124.6 607.9 124.6C614.2 124.6 619.0 104.0 625.3 104.0C629.2 104.0 632.2 118.0 636.1 118.0C637.3 118.0 638.3 105.0 639.5 105.0C641.4 105.0 642.9 124.6 644.8 124.6C646.9 124.6 648.5 105.0 650.6 105.0C652.5 105.0 654.1 124.6 656.0 124.6C658.1 124.6 659.8 105.0 661.9 105.0C664.0 105.0 665.6 124.6 667.7 124.6C674.5 124.6 679.8 104.0 686.6 104.0C691.7 104.0 695.7 124.6 700.8 124.6C702.6 124.6 704.0 105.0 705.8 105.0C707.9 105.0 709.5 124.6 711.6 124.6C713.5 124.6 715.0 105.0 716.9 105.0C719.1 105.0 720.7 124.6 722.9 124.6C724.8 124.6 726.3 105.0 728.2 105.0C730.3 105.0 731.9 124.6 734.0 124.6C736.1 124.6 737.7 105.0 739.8 105.0C741.9 105.0 743.6 124.6 745.7 124.6C747.8 124.6 749.4 105.0 751.5 105.0C753.5 105.0 755.0 124.6 757.0 124.6C759.0 124.6 760.6 105.0 762.6 105.0C764.6 105.0 766.1 124.6 768.1 124.6C770.2 124.6 771.8 105.0 773.9 105.0C776.0 105.0 777.6 124.6 779.7 124.6C781.8 124.6 783.5 105.0 785.6 105.0C787.7 105.0 789.3 124.6 791.4 124.6C793.5 124.6 795.1 105.0 797.2 105.0C799.3 105.0 800.9 124.6 803.0 124.6C804.9 124.6 806.4 105.0 808.3 105.0C810.5 105.0 812.1 124.6 814.3 124.6C816.4 124.6 818.0 105.0 820.1 105.0C822.2 105.0 823.8 124.6 825.9 124.6C828.0 124.6 829.5 104.0 831.6 104.0C837.5 104.0 842.0 124.6 847.9 124.6C854.2 124.6 859.0 104.0 865.3 104.0C871.6 104.0 876.5 124.6 882.8 124.6C887.9 124.6 891.8 105.0 896.9 105.0C898.7 105.0 900.1 124.6 901.9 124.6C903.9 124.6 905.4 105.0 907.4 105.0C909.6 105.0 911.3 124.6 913.5 124.6C915.4 124.6 917.0 105.0 918.9 105.0C920.8 105.0 922.4 124.6 924.3 124.6C926.4 124.6 927.9 105.0 930.0 105.0C932.1 105.0 933.7 124.6 935.8 124.6C937.9 124.6 939.5 105.0 941.6 105.0C943.7 105.0 945.3 124.6 947.4 124.6C949.5 124.6 951.2 105.0 953.3 105.0C955.4 105.0 957.0 124.6 959.1 124.6C960.5 124.6 961.5 110.0 962.9 110.0C966.3 110.0 969.0 124.6 972.4 124.6C978.4 124.6 983.0 104.0 989.0 104.0C995.3 104.0 1000.1 124.6 1006.4 124.6C1012.4 124.6 1017.0 104.0 1023.0 104.0C1029.6 104.0 1034.8 124.6 1041.4 124.6C1047.9 124.6 1053.0 104.0 1059.5 104.0C1061.9 104.0 1063.9 124.6 1066.3 124.6C1068.4 124.6 1070.0 105.0 1072.1 105.0C1074.2 105.0 1075.8 124.6 1077.9 124.6C1080.0 124.6 1081.6 105.0 1083.7 105.0C1085.8 105.0 1087.5 124.6 1089.6 124.6C1090.9 124.6 1091.9 110.0 1093.2 110.0C1096.7 110.0 1099.4 124.6 1102.9 124.6C1108.6 124.6 1112.9 104.0 1118.6 104.0C1124.9 104.0 1129.8 124.6 1136.1 124.6C1142.2 124.6 1146.9 104.0 1153.0 104.0C1155.3 104.0 1157.1 106.0 1159.4 106.0C1161.5 106.0 1163.1 124.6 1165.2 124.6C1167.3 124.6 1168.9 105.0 1171.0 105.0C1173.1 105.0 1174.8 124.6 1176.9 124.6C1179.1 124.6 1180.8 105.0 1183.0 105.0C1185.1 105.0 1186.6 124.6 1188.7 124.6C1189.6 124.6 1190.2 114.0 1191.1 114.0C1193.8 114.0 1195.8 124.6 1198.5 124.6C1204.4 124.6 1209.1 104.0 1215.0 104.0C1218.1 104.0 1220.5 116.0 1223.6 116.0C1224.5 116.0 1225.3 105.0 1226.2 105.0C1228.1 105.0 1229.5 124.6 1231.4 124.6C1233.6 124.6 1235.2 105.0 1237.4 105.0C1239.3 105.0 1240.7 124.6 1242.6 124.6C1244.8 124.6 1246.5 105.0 1248.7 105.0C1250.8 105.0 1252.3 124.6 1254.4 124.6C1256.4 124.6 1257.9 105.0 1259.9 105.0C1262.0 105.0 1263.5 124.6 1265.6 124.6C1267.9 124.6 1269.7 105.0 1272.0 105.0C1273.9 105.0 1275.3 124.6 1277.2 124.6C1279.4 124.6 1281.0 105.0 1283.2 105.0C1285.3 105.0 1286.8 124.6 1288.9 124.6C1290.9 124.6 1292.5 105.0 1294.5 105.0C1296.6 105.0 1298.1 124.6 1300.2 124.6C1302.5 124.6 1304.3 105.0 1306.6 105.0C1308.4 105.0 1309.9 124.6 1311.7 124.6C1313.9 124.6 1315.6 105.0 1317.8 105.0C1319.3 105.0 1320.6 120.0 1322.1 120.0C1325.8 120.0 1328.8 104.0 1332.5 104.0C1338.7 104.0 1343.6 124.6 1349.8 124.6C1355.7 124.6 1360.3 104.0 1366.2 104.0C1372.4 104.0 1377.3 124.6 1383.5 124.6C1389.7 124.6 1394.6 104.0 1400.8 104.0C1407.0 104.0 1411.8 124.6 1418.0 124.6C1420.5 124.6 1422.5 117.5 1425.0 117.5" fill="none" stroke="#1a1a1a" stroke-width="1.1"/></svg><div style="left:437px;top:183px;width:989px;height:11px;background:linear-gradient(#e6e4e1,#dfddda)"></div><div style="left:437px;top:182px;width:989px;height:1px;background:#cdc7bf"></div><div style="left:437px;top:183px;width:11px;height:11px;background:#f7f6f5;border-right:1px solid #d4d0cb;box-sizing:border-box"></div><div style="left:1415px;top:183px;width:11px;height:11px;background:#f7f6f5;border-left:1px solid #d4d0cb;box-sizing:border-box"></div><div style="left:1302px;top:183px;width:20px;height:11px;background:linear-gradient(#fdfdfc,#f3f2f0);border-left:1px solid #d2cfcb;border-right:1px solid #d2cfcb;box-sizing:border-box"></div><svg style="left:439.00px;top:184.50px" width="6" height="8" viewBox="0 0 6 8"><path d="M5 0.5V7.5L1 4Z" fill="#222"/></svg><svg style="left:1418.00px;top:184.50px" width="6" height="8" viewBox="0 0 6 8"><path d="M1 0.5V7.5L5 4Z" fill="#222"/></svg><svg style="left:0;top:0" width="1504" height="846"><rect x="437" y="370.6" width="989" height="2.6" fill="#111"/><rect x="437" y="373.2" width="989" height="1.8" fill="#ff8080" opacity="0.9"/><path d="M487.3 437 L487.6 310 L489 306.5 L490.5 309 L492 306 L493.5 308 L495 305.5 L496.9 307 L496.9 437.5Z" fill="#000"/><path d="M500.8 421 L500.8 325 L503 322.6 L505 325 L505 421Z" fill="#000"/><rect x="1235" y="338.7" width="10.5" height="64.6" fill="#ffff00"/><path d="M1245.5 434 L1246 312 L1247.4 310.3 L1249.2 312 L1249.2 434 L1247.4 435Z" fill="#000"/><path d="M1265.2 430 L1266 310 L1267.8 304.8 L1270.4 310 L1270.4 430 L1267.8 436.7Z" fill="#f0a060"/><rect x="1269.6" y="312" width="0.9" height="118" fill="#333"/><rect x="1244.8" y="340" width="0.8" height="62" fill="#444"/><rect x="1271.7" y="338.7" width="3.1" height="65.2" fill="#000"/><rect x="1277.6" y="338.7" width="6.6" height="65.2" fill="#000"/><path d="M1286.4 434 L1286.6 312 L1288.3 309.9 L1290.1 312 L1290 434 L1288.3 435Z" fill="#000"/><path d="M1296.2 436 L1296.4 307 L1298 304.8 L1300 307.5 L1302.4 304.8 L1302.4 436 L1300 438.3 L1298 437Z" fill="#000"/><rect x="1303.2" y="338.7" width="4" height="65.2" fill="#000"/><rect x="1348.7" y="338.7" width="6.6" height="65.2" fill="#000"/><path d="M1355.7 434 L1356 309 L1357.7 307 L1359.7 309 L1359.7 434 L1357.7 436.7Z" fill="#000"/><path d="M1364 436 L1364.2 308 L1366 306 L1367.5 309 L1370.6 306 L1370.6 436 L1367.5 438.3Z" fill="#000"/><rect x="1371.7" y="338.7" width="3.3" height="65.2" fill="#000"/></svg><div style="left:437px;top:441px;width:989px;height:11px;background:linear-gradient(#e6e4e1,#dfddda)"></div><div style="left:437px;top:440px;width:989px;height:1px;background:#cdc7bf"></div><div style="left:437px;top:441px;width:11px;height:11px;background:#f7f6f5;border-right:1px solid #d4d0cb;box-sizing:border-box"></div><div style="left:1415px;top:441px;width:11px;height:11px;background:#f7f6f5;border-left:1px solid #d4d0cb;box-sizing:border-box"></div><div style="left:448px;top:441px;width:806px;height:11px;background:linear-gradient(#fdfdfc,#f3f2f0);border-left:1px solid #d2cfcb;border-right:1px solid #d2cfcb;box-sizing:border-box"></div><svg style="left:439.00px;top:442.50px" width="6" height="8" viewBox="0 0 6 8"><path d="M5 0.5V7.5L1 4Z" fill="#222"/></svg><svg style="left:1418.00px;top:442.50px" width="6" height="8" viewBox="0 0 6 8"><path d="M1 0.5V7.5L5 4Z" fill="#222"/></svg><div style="left:437px;top:221px;width:1031px;height:65px;background:#fff;border:1px solid #bdb9b3;box-sizing:border-box"></div><div style="left:1456px;top:221px;width:12px;height:65px;background:linear-gradient(90deg,#e6e4e1,#dedcd9);border:1px solid #c6c2bc;box-sizing:border-box"></div><div style="left:1456px;top:221px;width:12px;height:12px;background:#faf9f8;border:1px solid #c6c2bc;box-sizing:border-box"></div><div style="left:1456px;top:274px;width:12px;height:12px;background:#faf9f8;border:1px solid #c6c2bc;box-sizing:border-box"></div><div style="left:1456px;top:254px;width:12px;height:22px;background:#f9f8f7;border:1px solid #c6c2bc;box-sizing:border-box"></div><svg style="left:1459.00px;top:224.00px" width="6" height="6" viewBox="0 0 6 6"><path d="M0 4.6H6L3 1.6Z" fill="#222"/></svg><svg style="left:1459.00px;top:277.00px" width="6" height="6" viewBox="0 0 6 6"><path d="M0 1.6H6L3 4.6Z" fill="#222"/></svg><div style="left:438.3px;top:222.00px;width:1018px;height:63.00px;overflow:hidden;position:absolute"><div class="m" style="position:absolute;left:3.2px;top:-4.50px;">aaaaaaaa67686768fc99ff1598fbf [<b>Pause:</b> 55291 samples]</div><div class="m" style="position:absolute;left:3.2px;top:7.10px;">aaaaaaaa67686768ecc16de20f0c2844d97ad239735619b455caf2955bf9f [<b>Pause:</b> 13176 samples]</div><div class="m" style="position:absolute;left:3.2px;top:18.70px;">aaaaaaaa<span style="background:#3584d0;color:#fff;-webkit-text-stroke-color:#fff">67686</span>768fcfa7da910d20 [<b>Pause:</b> 110039 samples]</div><div class="m" style="position:absolute;left:3.2px;top:30.30px;">aaaaaaaa67686768ebc16d818db64bc6637ade5b6104c4baaa47132c6c3ba38 [<b>Pause:</b> 13602 samples]</div><div class="m" style="position:absolute;left:3.2px;top:41.90px;">aaaaaaaa67686768e8816de20f0c2844d97ad2397408e1f8f88d77c5466c5c8ca37e7 [<b>Pause:</b> 12133 samples]</div><div class="m" style="position:absolute;left:3.2px;top:53.50px;">aaaaaaaa67686768fcfa7da910d20 [<b>Pause:</b> 1049346 samples]</div></div><div style="left:437px;top:479px;width:1031px;height:65px;background:#fff;border:1px solid #bdb9b3;box-sizing:border-box"></div><div style="left:1456px;top:479px;width:12px;height:65px;background:linear-gradient(90deg,#e6e4e1,#dedcd9);border:1px solid #c6c2bc;box-sizing:border-box"></div><div style="left:1456px;top:479px;width:12px;height:12px;background:#faf9f8;border:1px solid #c6c2bc;box-sizing:border-box"></div><div style="left:1456px;top:532px;width:12px;height:12px;background:#faf9f8;border:1px solid #c6c2bc;box-sizing:border-box"></div><div style="left:1456px;top:490px;width:12px;height:21px;background:#f9f8f7;border:1px solid #c6c2bc;box-sizing:border-box"></div><svg style="left:1459.00px;top:482.00px" width="6" height="6" viewBox="0 0 6 6"><path d="M0 4.6H6L3 1.6Z" fill="#222"/></svg><svg style="left:1459.00px;top:535.00px" width="6" height="6" viewBox="0 0 6 6"><path d="M0 1.6H6L3 4.6Z" fill="#222"/></svg><div style="left:438.3px;top:480.00px;width:1018px;height:63.00px;overflow:hidden;position:absolute"><div class="m" style="position:absolute;left:3.2px;top:3.90px;">101010101010101010101010101010101001101001111101100110100111110111010010011000010110110101111010111011011000001100011101101101011100101000111101011010011001110010011000</div><div class="m" style="position:absolute;left:3.2px;top:15.60px;">010100111010000011111111010001110011000001011101001001110101101101000011011011010101000110110100010101100111100011010100010101111110011010011001000000110010011010001000</div><div class="m" style="position:absolute;left:3.2px;top:27.30px;">00100100111101110110010011111011100011000101111110101000101011011100100001101100100011001000001100110110010101110100 [<b>Pause:</b> 26660 samples]</div><div class="m" style="position:absolute;left:3.2px;top:39.00px;">1010101010101010101010101010101010110011101101000011001110110100001111100111101001010100101110010010010101110011110111010011101110110011000 [<b>Pause:</b> 3892888 samples]</div><div style="position:absolute;left:3px;top:49.30px;width:1012px;height:20px;background:#ffff00"></div><div class="m" style="position:absolute;left:3.2px;top:50.60px;">101010101010101010101010101010101001101001111101100110100111110111001110111100001011011011001001010100010111110110100101111000110011000111011101011010011001111010111001</div></div>
</body></html>
